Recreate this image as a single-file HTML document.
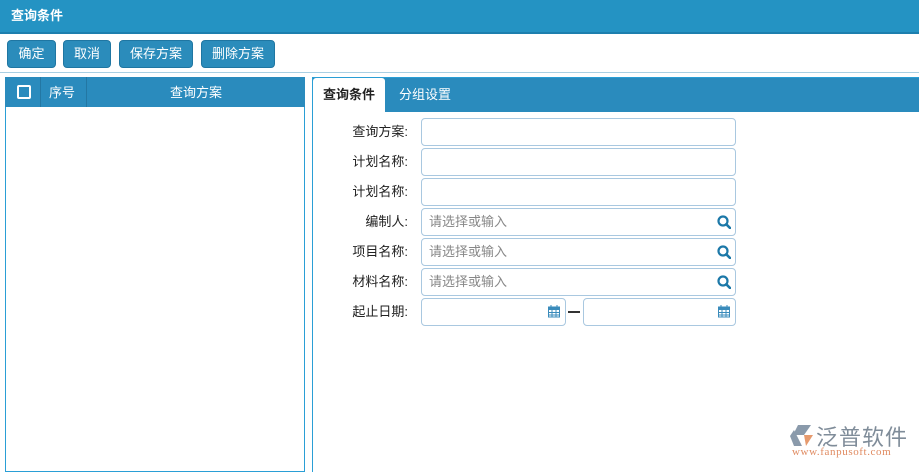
<!DOCTYPE html>
<html><head><meta charset="utf-8"><style>
*{margin:0;padding:0;box-sizing:border-box}
body{width:919px;height:468px;overflow:hidden;background:#fff;font-family:"Liberation Sans","Noto Sans CJK SC",sans-serif;font-size:13px;color:#222;position:relative}
.top{position:absolute;left:0;top:0;width:919px;height:34px;background:#2493c3;border-bottom:2px solid #1d7fae;color:#fff;font-weight:bold;font-size:13px;padding:5px 0 0 11px}
.btn{position:absolute;top:40px;height:28px;background:#2b8cbb;border:1px solid #1f76a2;border-radius:4px;color:#fff;font-size:13px;text-align:center;line-height:26px}
.sep{position:absolute;left:0;top:72px;width:919px;height:1px;background:#a9cfe3}
.lp{position:absolute;left:5px;top:77px;width:300px;height:395px;border:1px solid #2a9fd6;border-top:none}
.lh{position:absolute;left:5px;top:77px;width:300px;height:30px;background:#2a8bbd;color:#fff}
.rp{position:absolute;left:312px;top:77px;width:610px;height:395px;border-left:1px solid #2a9fd6;border-top:1px solid #2a9fd6}
.tabs{position:absolute;left:313px;top:78px;width:606px;height:34px;background:#2a8bbd}
.tab{position:absolute;top:78px;height:34px;line-height:34px;font-size:13px}
.lab{position:absolute;left:330px;width:78px;text-align:right;font-size:13px}
.in{position:absolute;left:421px;width:315px;height:28px;border:1px solid #a9c8e0;border-radius:4px;color:#888;padding-left:7px;line-height:26px}
svg{position:absolute}
</style></head><body>
<div class="top">查询条件</div>
<div class="btn" style="left:7px;width:49px">确定</div>
<div class="btn" style="left:63px;width:48px">取消</div>
<div class="btn" style="left:119px;width:74px">保存方案</div>
<div class="btn" style="left:201px;width:74px">删除方案</div>
<div class="sep"></div>
<div class="lp"></div>
<div class="lh">
<div style="position:absolute;left:12px;top:8px;width:14px;height:14px;border:2px solid #fff;border-radius:2px"></div>
<div style="position:absolute;left:35px;top:0;width:1px;height:30px;background:#2377a3"></div>
<div style="position:absolute;left:44px;top:5px;font-size:13px">序号</div>
<div style="position:absolute;left:81px;top:0;width:1px;height:30px;background:#2377a3"></div>
<div style="position:absolute;left:82px;width:218px;top:5px;text-align:center">查询方案</div>
</div>
<div class="rp"></div>
<div class="tabs"></div>
<div class="tab" style="left:313px;width:72px;background:#fff;font-weight:bold;text-align:center;border-radius:3px 3px 0 0">查询条件</div>
<div class="tab" style="left:399px;color:#fff">分组设置</div>
<div class="lab" style="top:121px">查询方案:</div><div class="in" style="top:118px"></div>
<div class="lab" style="top:151px">计划名称:</div><div class="in" style="top:148px"></div>
<div class="lab" style="top:181px">计划名称:</div><div class="in" style="top:178px"></div>
<div class="lab" style="top:211px">编制人:</div><div class="in" style="top:208px">请选择或输入</div>
<div class="lab" style="top:241px">项目名称:</div><div class="in" style="top:238px">请选择或输入</div>
<div class="lab" style="top:271px">材料名称:</div><div class="in" style="top:268px">请选择或输入</div>
<div class="lab" style="top:301px">起止日期:</div>
<div class="in" style="top:298px;width:145px"></div>
<div style="position:absolute;left:568px;top:311px;width:12px;height:1.5px;background:#333"></div>
<div class="in" style="top:298px;left:583px;width:153px"></div>
<svg width="0" height="0"><defs><g id="q"><circle cx="6" cy="6" r="4.5" fill="none" stroke="#1c78a8" stroke-width="2.2"/><path d="M9.3 9.3L13 13" stroke="#1c78a8" stroke-width="2.6" stroke-linecap="round"/></g><g id="c"><rect x="0.5" y="2" width="11" height="10" fill="none" stroke="#3a8bbb"/><rect x="0.5" y="2" width="11" height="3" fill="#3a8bbb"/><path d="M3 0v3M9 0v3M0.5 7.5h11M0.5 10h11M4 5v7M8 5v7" stroke="#3a8bbb"/></g></defs></svg>
<svg style="left:717px;top:215px" width="14" height="14"><use href="#q"/></svg>
<svg style="left:717px;top:245px" width="14" height="14"><use href="#q"/></svg>
<svg style="left:717px;top:275px" width="14" height="14"><use href="#q"/></svg>
<svg style="left:548px;top:305px" width="12" height="13"><use href="#c"/></svg>
<svg style="left:718px;top:305px" width="12" height="13"><use href="#c"/></svg>
<svg style="left:789px;top:424px" width="28" height="24"><path d="M9 1h13l-7 10H4z" fill="#8a9aab"/><path d="M1 12l4-6 8 16H5z" fill="#8a9aab"/><path d="M15 11h9l-7 11z" fill="#e69a6e"/></svg>
<div style="position:absolute;left:816px;top:420px;font-size:22px;color:#7f8c99;letter-spacing:1px">泛普软件</div>
<div style="position:absolute;left:792px;top:446px;font-size:11px;color:#e08a60;font-family:'Liberation Serif',serif;letter-spacing:0.6px">www.fanpusoft.com</div>
</body></html>
